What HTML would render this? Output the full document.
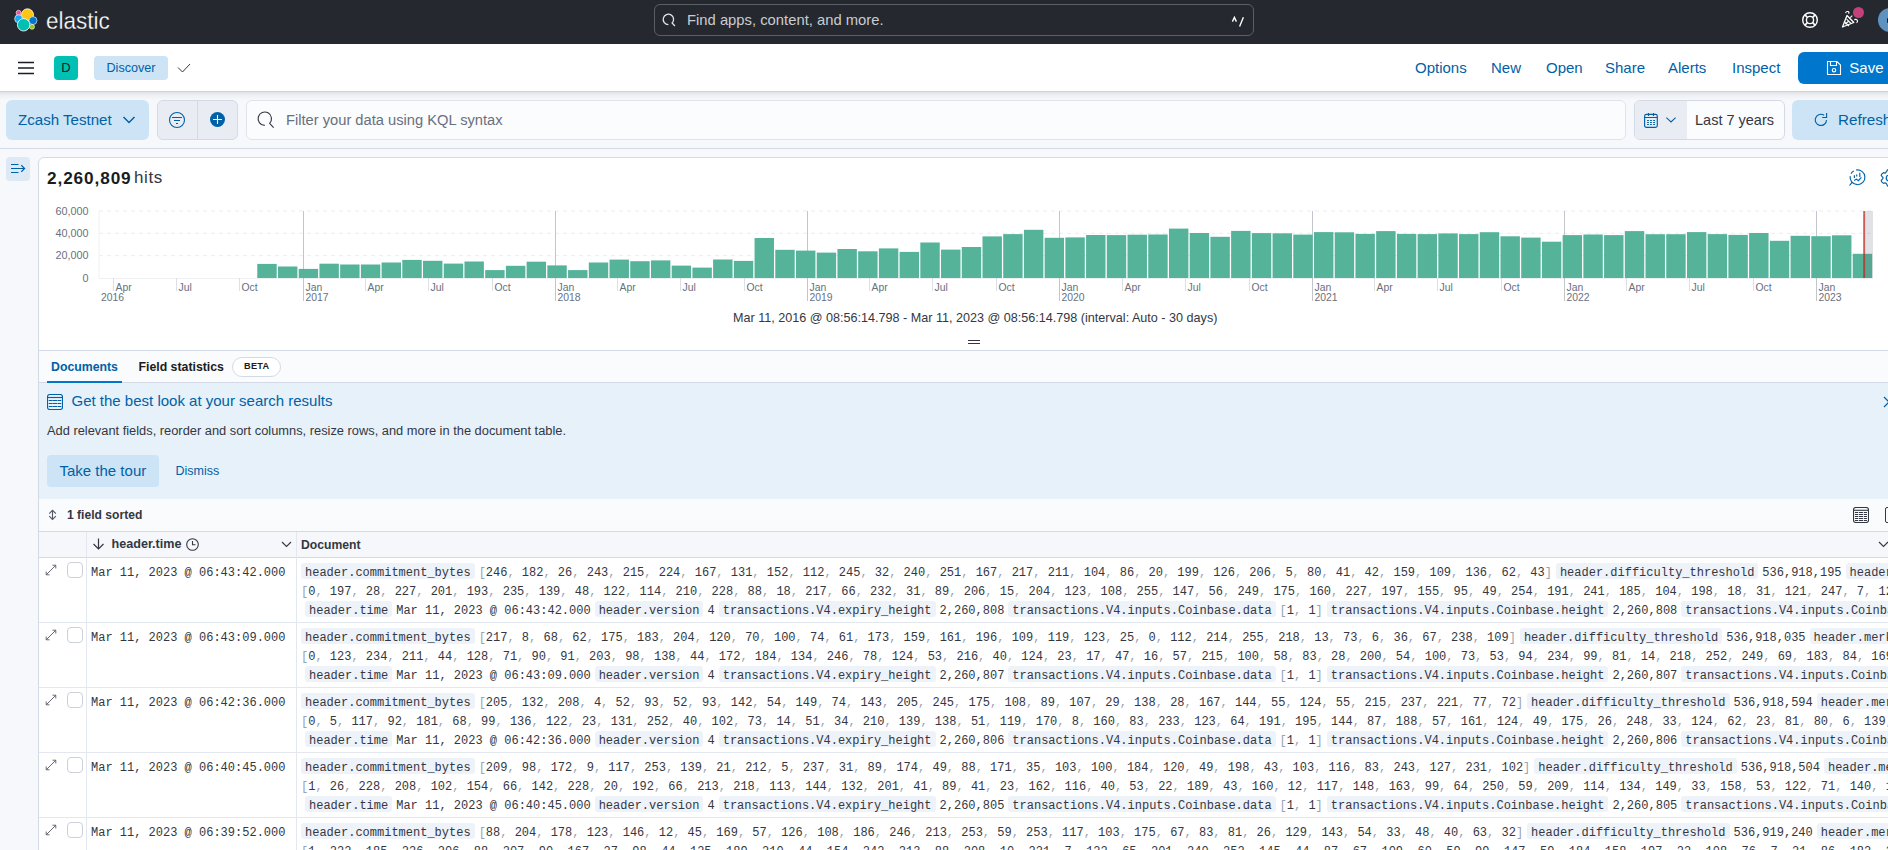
<!DOCTYPE html>
<html><head><meta charset="utf-8">
<style>
*{box-sizing:border-box;margin:0;padding:0}
html,body{width:1888px;height:850px;overflow:hidden;background:#f7f8fc;font-family:"Liberation Sans",sans-serif;color:#343741}
.abs{position:absolute}
svg{display:block}
/* header */
#hdr{position:absolute;left:0;top:0;width:1888px;height:44px;background:#25282f}
#appbar{position:absolute;left:0;top:44px;width:1888px;height:48px;background:#fff;border-bottom:1px solid #cdd3dd}
#shadow{position:absolute;left:0;top:92px;width:1888px;height:8px;background:linear-gradient(rgba(0,0,0,0.09),rgba(0,0,0,0.035) 40%,rgba(0,0,0,0))}
#qbar{position:absolute;left:0;top:92px;width:1888px;height:57px;background:#f7f8fc;border-bottom:1px solid #d3dae6}
.link{position:absolute;top:58px;font-size:15px;line-height:20px;color:#0061a6;white-space:nowrap}
.lbl{white-space:nowrap;position:absolute}
</style></head><body>

<!-- ============ HEADER ============ -->
<div id="hdr">
  <svg class="abs" style="left:13px;top:7px" width="26" height="26" viewBox="0 0 26 26">
    <circle cx="14.5" cy="7.8" r="6" fill="#fec514" stroke="#fff" stroke-width="0.8"/>
    <circle cx="5.6" cy="5.8" r="2.5" fill="#f04e98" stroke="#fff" stroke-width="0.6"/>
    <circle cx="5.6" cy="11.8" r="4" fill="#1ba9f5" stroke="#fff" stroke-width="0.6"/>
    <circle cx="20" cy="13.6" r="4" fill="#0077cc" stroke="#fff" stroke-width="0.6"/>
    <circle cx="19" cy="19.8" r="2.5" fill="#93c90e" stroke="#fff" stroke-width="0.6"/>
    <circle cx="10.6" cy="17.8" r="6.2" fill="#00bfb3" stroke="#fff" stroke-width="0.8"/>
  </svg>
  <div class="lbl" style="left:46px;top:8px;font-size:24.6px;line-height:26px;color:#fff;-webkit-text-stroke:0.3px #25282f;transform:scaleX(0.915);transform-origin:0 0">elastic</div>

  <div class="abs" style="left:654px;top:4px;width:600px;height:32px;border:1px solid #5a5f67;border-radius:6px"></div>
  <svg class="abs" style="left:660px;top:12px" width="16" height="16" viewBox="0 0 16 16"><path d="M8.4 12.6A5.2 5.2 0 1 1 12.14 11.01L14.9 14" fill="none" stroke="#dfe5ef" stroke-width="1.3"/></svg>
  <div class="lbl" style="left:687px;top:10px;font-size:14.8px;line-height:20px;color:#c9ccd2">Find apps, content, and more.</div>
  <svg class="abs" style="left:1230px;top:15px" width="16" height="14" viewBox="0 0 16 14"><path d="M2.4 6.6L4.4 2.4L6.4 6.6M9.6 11.6L13.4 2.2" fill="none" stroke="#fff" stroke-width="1.35"/></svg>

  <!-- help -->
  <svg class="abs" style="left:1801px;top:11px" width="18" height="18" viewBox="0 0 18 18"><circle cx="9" cy="9" r="7.3" fill="none" stroke="#fff" stroke-width="1.4"/><circle cx="9" cy="9" r="3.6" fill="none" stroke="#fff" stroke-width="1.4"/><path d="M3.9 3.9L6.4 6.4M14.1 3.9L11.6 6.4M3.9 14.1L6.4 11.6M14.1 14.1L11.6 11.6" stroke="#fff" stroke-width="1.6"/></svg>
  <!-- announce -->
  <svg class="abs" style="left:1840px;top:8px" width="22" height="22" viewBox="0 0 22 22"><path d="M2.5 19L7 7.5L13.8 14.5Z" fill="none" stroke="#fff" stroke-width="1.3" stroke-linejoin="round"/><path d="M5.2 16.2L8.2 13.5M6.6 11.2L11 15.5M4 13.5L9 18" fill="none" stroke="#fff" stroke-width="1.1"/><path d="M5.6 5.2q0.6-2.3 2.6-1.6q1.2 0.6 0.4 2.2M14.3 11.6q2.6-0.8 3.2 1.1q0.4 1.4-1 2M10.2 9.6L12.3 7.6" fill="none" stroke="#fff" stroke-width="1.1"/></svg>
  <div class="abs" style="left:1852.5px;top:6.5px;width:11px;height:11px;border-radius:50%;background:#c4407c"></div>
  <div class="abs" style="left:1878px;top:8px;width:24px;height:24px;border-radius:50%;background:#6092c0"></div>
  <div class="abs" style="left:1887px;top:18px;width:3px;height:5px;border-radius:1px;background:#1a1c21"></div>
</div>

<!-- ============ APP BAR ============ -->
<div id="appbar"></div>
<svg class="abs" style="left:18px;top:61px" width="16" height="14" viewBox="0 0 16 14"><path d="M0 1.5H16M0 7H16M0 12.5H16" stroke="#1a1c21" stroke-width="1.5"/></svg>
<div class="abs" style="left:54px;top:56px;width:24px;height:24px;border-radius:4px;background:#00bfb3;color:#1a1c21;font-size:13px;line-height:24px;text-align:center">D</div>
<div class="abs" style="left:94px;top:56px;width:74px;height:24px;border-radius:4px;background:#cce4f5;color:#0061a6;font-size:12.6px;line-height:24px;text-align:center">Discover</div>
<svg class="abs" style="left:177px;top:63px" width="14" height="10" viewBox="0 0 14 10"><path d="M1 4.5L5.5 9L13 1" fill="none" stroke="#343741" stroke-width="1"/></svg>

<div class="link" style="left:1415px">Options</div>
<div class="link" style="left:1491px">New</div>
<div class="link" style="left:1546px">Open</div>
<div class="link" style="left:1605px">Share</div>
<div class="link" style="left:1668px">Alerts</div>
<div class="link" style="left:1732px">Inspect</div>
<div class="abs" style="left:1798px;top:52px;width:120px;height:32px;border-radius:6px;background:#0077cc"></div>
<svg class="abs" style="left:1826px;top:60px" width="16" height="16" viewBox="0 0 16 16"><path d="M1.5 1.5H11L14.5 5V14.5H1.5Z" fill="none" stroke="#fff" stroke-width="1.1"/><path d="M4.5 1.5V5.5H10.5V1.5" fill="none" stroke="#fff" stroke-width="1.1"/><circle cx="8" cy="10.2" r="1.7" fill="none" stroke="#fff" stroke-width="1.1"/></svg>
<div class="link" style="left:1849.3px;color:#fff">Save</div>

<!-- ============ QUERY BAR ============ -->
<div id="qbar"></div>
<div id="shadow"></div>
<div class="abs" style="left:6px;top:100px;width:143px;height:40px;border-radius:6px;background:#cce4f5"></div>
<div class="lbl" style="left:18px;top:110px;font-size:15.1px;line-height:20px;color:#0061a6">Zcash Testnet</div>
<svg class="abs" style="left:122px;top:115px" width="14" height="10" viewBox="0 0 14 10"><path d="M1.5 2L7 7.5L12.5 2" fill="none" stroke="#0061a6" stroke-width="1.5"/></svg>

<div class="abs" style="left:157px;top:100px;width:81px;height:40px;border-radius:6px;background:#e9edf3;border:1px solid #d3dae6"></div>
<div class="abs" style="left:197px;top:101px;width:1px;height:38px;background:#d3dae6"></div>
<svg class="abs" style="left:168px;top:111px" width="18" height="18" viewBox="0 0 18 18"><circle cx="9" cy="9" r="7.5" fill="none" stroke="#0061a6" stroke-width="1.1"/><path d="M4 6.5H14M6 9.5H12M8 12.5H10" stroke="#0061a6" stroke-width="1.1"/></svg>
<svg class="abs" style="left:209px;top:112px" width="17" height="16" viewBox="0 0 17 16"><circle cx="8.5" cy="7.5" r="7.5" fill="#0061a6"/><path d="M8.5 3V12M4 7.5H13" stroke="#fff" stroke-width="1.1"/></svg>

<div class="abs" style="left:246px;top:100px;width:1380px;height:40px;border-radius:6px;background:#fbfcfd;border:1px solid #dfe4ec"></div>
<svg class="abs" style="left:255px;top:109px" width="20" height="20" viewBox="0 0 20 20"><path d="M9.8 16.4A6.7 6.7 0 1 1 14.62 14.35L18.6 18.6" fill="none" stroke="#343741" stroke-width="1.15"/></svg>
<div class="lbl" style="left:286px;top:110px;font-size:14.7px;line-height:20px;color:#69707d">Filter your data using KQL syntax</div>

<div class="abs" style="left:1634px;top:100px;width:151px;height:40px;border-radius:6px;background:#fbfcfd;border:1px solid #d3dae6;overflow:hidden"><div style="position:absolute;left:0;top:0;width:52px;height:38px;background:#e9edf3"></div></div>
<svg class="abs" style="left:1644px;top:113px" width="15" height="16" viewBox="0 0 15 16"><rect x="0.6" y="1.4" width="12.7" height="12.9" rx="1.8" fill="none" stroke="#0061a6" stroke-width="1.15"/><path d="M0.6 4.5H13.3M4.5 -0.2V3M9.5 -0.2V3" stroke="#0061a6" stroke-width="1.15"/><path d="M3.1 7.5h1.8M6.1 7.5h1.8M9.2 7.5h1.8M3.1 9.5h1.8M6.1 9.5h1.8M9.2 9.5h1.8M3.1 11.5h1.8M6.1 11.5h1.8M9.2 11.5h1.8" stroke="#0061a6" stroke-width="1"/></svg>
<svg class="abs" style="left:1666px;top:117px" width="10" height="6" viewBox="0 0 10 6"><path d="M0.3 0.6L5 5L9.7 0.6" fill="none" stroke="#0061a6" stroke-width="1.15"/></svg>
<div class="lbl" style="left:1695px;top:110px;font-size:14.5px;line-height:20px;color:#343741">Last 7 years</div>

<div class="abs" style="left:1792px;top:100px;width:120px;height:40px;border-radius:6px;background:#cce4f5"></div>
<svg class="abs" style="left:1814px;top:112px" width="14" height="14" viewBox="0 0 14 14"><path d="M10.1 3.3A5.6 5.6 0 1 0 12.5 7.9" fill="none" stroke="#0061a6" stroke-width="1.1"/><path d="M12.6 1.1V5.5H8.2" fill="none" stroke="#0061a6" stroke-width="1.1"/></svg>
<div class="lbl" style="left:1838px;top:110px;font-size:15.2px;line-height:20px;color:#0061a6">Refresh</div>

<!-- ============ MAIN ============ -->
<div class="abs" style="left:6px;top:157px;width:24px;height:24px;border-radius:4px;background:#dde9f5"></div>
<svg class="abs" style="left:10px;top:163px" width="16" height="12" viewBox="0 0 16 12"><path d="M1 1.5H8.5M1 5.5H14.5M1 9.5H8.5M11.3 2.3L14.6 5.5L11.3 8.7" fill="none" stroke="#0061a6" stroke-width="1.2"/></svg>

<div id="panel" class="abs" style="left:38px;top:157px;width:1900px;height:800px;background:#fff;border:1px solid #d3dae6;border-radius:6px 0 0 0;overflow:hidden">
</div>
<style>
.mono{position:absolute;font-family:"Liberation Mono",monospace;font-size:12px;line-height:19px;color:#343741;white-space:nowrap}
.doc b{font-weight:normal;background:#eef2f9;border-radius:3px;padding:0 4px;margin-right:4px;display:inline-block;height:15.5px;line-height:21px;vertical-align:baseline;overflow:visible}
.doc .v{margin-right:4px}
.doc i{font-style:normal;color:#98a2b3}
</style>
<div class="lbl" style="left:47px;top:167px;line-height:22px;color:#1a1c21"><span style="font-weight:bold;font-size:17.2px;letter-spacing:0.9px">2,260,809</span></div><div class="lbl" style="left:134px;top:167px;line-height:22px;font-size:17px;color:#343741;letter-spacing:0.6px">hits</div>
<svg class="abs" style="left:1848px;top:168px" width="18" height="19" viewBox="0 0 18 19"><path d="M8.01 2.05A7.4 7.4 0 1 1 2.2 8.06M3.01 5.75A7.4 7.4 0 0 1 5.69 2.96M4.1 14.4L1.5 17.5M6.4 7.2V10.1M8.7 6.4V8.4M11.8 4.8V8.9M6.2 12.6L8.5 11.1L10.3 12.6L13.4 9.3" fill="none" stroke="#0061a6" stroke-width="1.15"/></svg>
<svg class="abs" style="left:1880px;top:169px" width="18" height="18" viewBox="0 0 18 18"><path d="M7.5 0.9L6.1 3.2L5.2 4.2L3.5 3.6L1.9 4.9L1.2 6.3L3.2 9L1.2 11.7L1.9 13.1L3.5 14.4L5.2 13.8L6.5 14.8L7.5 17.1L10.5 17.1L11.5 14.8L12.8 13.8L14.5 14.4L16.1 13.1L16.8 11.7L14.8 9L16.8 6.3L16.1 4.9L14.5 3.6L12.8 4.2L11.9 3.2L10.5 0.9Z" fill="none" stroke="#0061a6" stroke-width="1.15" stroke-linejoin="round"/><circle cx="9" cy="9" r="2.8" fill="none" stroke="#0061a6" stroke-width="1.15"/></svg>
<svg class="abs" style="left:0;top:195px" width="1888" height="115" viewBox="0 195 1888 115">
<line x1="99" y1="211.0" x2="1873" y2="211.0" stroke="#eaedf1" stroke-width="1" stroke-dasharray="4 4"/>
<line x1="99" y1="233.33" x2="1873" y2="233.33" stroke="#eaedf1" stroke-width="1" stroke-dasharray="4 4"/>
<line x1="99" y1="255.67" x2="1873" y2="255.67" stroke="#eaedf1" stroke-width="1" stroke-dasharray="4 4"/>
<line x1="99" y1="211" x2="99" y2="278.5" stroke="#eef0f3" stroke-width="1"/>
<line x1="99" y1="278.5" x2="1873" y2="278.5" stroke="#eef0f3" stroke-width="1"/>
<line x1="113.5" y1="278" x2="113.5" y2="291" stroke="#dde1e7" stroke-width="1"/>
<text x="115.5" y="290.7" font-size="10.4" fill="#69707d" font-family="Liberation Sans">Apr</text>
<line x1="176.5" y1="278" x2="176.5" y2="291" stroke="#dde1e7" stroke-width="1"/>
<text x="178.5" y="290.7" font-size="10.4" fill="#69707d" font-family="Liberation Sans">Jul</text>
<line x1="239.5" y1="278" x2="239.5" y2="291" stroke="#dde1e7" stroke-width="1"/>
<text x="241.5" y="290.7" font-size="10.4" fill="#69707d" font-family="Liberation Sans">Oct</text>
<line x1="303.5" y1="211" x2="303.5" y2="301" stroke="#c2c6cc" stroke-width="1"/>
<text x="305.5" y="290.7" font-size="10.4" fill="#69707d" font-family="Liberation Sans">Jan</text>
<text x="305.5" y="300.7" font-size="10.4" fill="#69707d" font-family="Liberation Sans">2017</text>
<line x1="365.5" y1="278" x2="365.5" y2="291" stroke="#dde1e7" stroke-width="1"/>
<text x="367.5" y="290.7" font-size="10.4" fill="#69707d" font-family="Liberation Sans">Apr</text>
<line x1="428.5" y1="278" x2="428.5" y2="291" stroke="#dde1e7" stroke-width="1"/>
<text x="430.5" y="290.7" font-size="10.4" fill="#69707d" font-family="Liberation Sans">Jul</text>
<line x1="492.5" y1="278" x2="492.5" y2="291" stroke="#dde1e7" stroke-width="1"/>
<text x="494.5" y="290.7" font-size="10.4" fill="#69707d" font-family="Liberation Sans">Oct</text>
<line x1="555.5" y1="211" x2="555.5" y2="301" stroke="#c2c6cc" stroke-width="1"/>
<text x="557.5" y="290.7" font-size="10.4" fill="#69707d" font-family="Liberation Sans">Jan</text>
<text x="557.5" y="300.7" font-size="10.4" fill="#69707d" font-family="Liberation Sans">2018</text>
<line x1="617.5" y1="278" x2="617.5" y2="291" stroke="#dde1e7" stroke-width="1"/>
<text x="619.5" y="290.7" font-size="10.4" fill="#69707d" font-family="Liberation Sans">Apr</text>
<line x1="680.5" y1="278" x2="680.5" y2="291" stroke="#dde1e7" stroke-width="1"/>
<text x="682.5" y="290.7" font-size="10.4" fill="#69707d" font-family="Liberation Sans">Jul</text>
<line x1="744.5" y1="278" x2="744.5" y2="291" stroke="#dde1e7" stroke-width="1"/>
<text x="746.5" y="290.7" font-size="10.4" fill="#69707d" font-family="Liberation Sans">Oct</text>
<line x1="807.5" y1="211" x2="807.5" y2="301" stroke="#c2c6cc" stroke-width="1"/>
<text x="809.5" y="290.7" font-size="10.4" fill="#69707d" font-family="Liberation Sans">Jan</text>
<text x="809.5" y="300.7" font-size="10.4" fill="#69707d" font-family="Liberation Sans">2019</text>
<line x1="869.5" y1="278" x2="869.5" y2="291" stroke="#dde1e7" stroke-width="1"/>
<text x="871.5" y="290.7" font-size="10.4" fill="#69707d" font-family="Liberation Sans">Apr</text>
<line x1="932.5" y1="278" x2="932.5" y2="291" stroke="#dde1e7" stroke-width="1"/>
<text x="934.5" y="290.7" font-size="10.4" fill="#69707d" font-family="Liberation Sans">Jul</text>
<line x1="996.5" y1="278" x2="996.5" y2="291" stroke="#dde1e7" stroke-width="1"/>
<text x="998.5" y="290.7" font-size="10.4" fill="#69707d" font-family="Liberation Sans">Oct</text>
<line x1="1059.5" y1="211" x2="1059.5" y2="301" stroke="#c2c6cc" stroke-width="1"/>
<text x="1061.5" y="290.7" font-size="10.4" fill="#69707d" font-family="Liberation Sans">Jan</text>
<text x="1061.5" y="300.7" font-size="10.4" fill="#69707d" font-family="Liberation Sans">2020</text>
<line x1="1122.5" y1="278" x2="1122.5" y2="291" stroke="#dde1e7" stroke-width="1"/>
<text x="1124.5" y="290.7" font-size="10.4" fill="#69707d" font-family="Liberation Sans">Apr</text>
<line x1="1185.5" y1="278" x2="1185.5" y2="291" stroke="#dde1e7" stroke-width="1"/>
<text x="1187.5" y="290.7" font-size="10.4" fill="#69707d" font-family="Liberation Sans">Jul</text>
<line x1="1249.5" y1="278" x2="1249.5" y2="291" stroke="#dde1e7" stroke-width="1"/>
<text x="1251.5" y="290.7" font-size="10.4" fill="#69707d" font-family="Liberation Sans">Oct</text>
<line x1="1312.5" y1="211" x2="1312.5" y2="301" stroke="#c2c6cc" stroke-width="1"/>
<text x="1314.5" y="290.7" font-size="10.4" fill="#69707d" font-family="Liberation Sans">Jan</text>
<text x="1314.5" y="300.7" font-size="10.4" fill="#69707d" font-family="Liberation Sans">2021</text>
<line x1="1374.5" y1="278" x2="1374.5" y2="291" stroke="#dde1e7" stroke-width="1"/>
<text x="1376.5" y="290.7" font-size="10.4" fill="#69707d" font-family="Liberation Sans">Apr</text>
<line x1="1437.5" y1="278" x2="1437.5" y2="291" stroke="#dde1e7" stroke-width="1"/>
<text x="1439.5" y="290.7" font-size="10.4" fill="#69707d" font-family="Liberation Sans">Jul</text>
<line x1="1501.5" y1="278" x2="1501.5" y2="291" stroke="#dde1e7" stroke-width="1"/>
<text x="1503.5" y="290.7" font-size="10.4" fill="#69707d" font-family="Liberation Sans">Oct</text>
<line x1="1564.5" y1="211" x2="1564.5" y2="301" stroke="#c2c6cc" stroke-width="1"/>
<text x="1566.5" y="290.7" font-size="10.4" fill="#69707d" font-family="Liberation Sans">Jan</text>
<text x="1566.5" y="300.7" font-size="10.4" fill="#69707d" font-family="Liberation Sans">2022</text>
<line x1="1626.5" y1="278" x2="1626.5" y2="291" stroke="#dde1e7" stroke-width="1"/>
<text x="1628.5" y="290.7" font-size="10.4" fill="#69707d" font-family="Liberation Sans">Apr</text>
<line x1="1689.5" y1="278" x2="1689.5" y2="291" stroke="#dde1e7" stroke-width="1"/>
<text x="1691.5" y="290.7" font-size="10.4" fill="#69707d" font-family="Liberation Sans">Jul</text>
<line x1="1753.5" y1="278" x2="1753.5" y2="291" stroke="#dde1e7" stroke-width="1"/>
<text x="1755.5" y="290.7" font-size="10.4" fill="#69707d" font-family="Liberation Sans">Oct</text>
<line x1="1816.5" y1="211" x2="1816.5" y2="301" stroke="#c2c6cc" stroke-width="1"/>
<text x="1818.5" y="290.7" font-size="10.4" fill="#69707d" font-family="Liberation Sans">Jan</text>
<text x="1818.5" y="300.7" font-size="10.4" fill="#69707d" font-family="Liberation Sans">2023</text>
<rect x="257.27" y="263.90" width="19.42" height="14.10" fill="#54b399"/>
<rect x="277.99" y="266.50" width="19.42" height="11.50" fill="#54b399"/>
<rect x="298.71" y="268.90" width="19.42" height="9.10" fill="#54b399"/>
<rect x="319.43" y="263.70" width="19.42" height="14.30" fill="#54b399"/>
<rect x="340.15" y="264.50" width="19.42" height="13.50" fill="#54b399"/>
<rect x="360.87" y="264.50" width="19.42" height="13.50" fill="#54b399"/>
<rect x="381.59" y="262.50" width="19.42" height="15.50" fill="#54b399"/>
<rect x="402.31" y="259.90" width="19.42" height="18.10" fill="#54b399"/>
<rect x="423.03" y="260.80" width="19.42" height="17.20" fill="#54b399"/>
<rect x="443.75" y="263.60" width="19.42" height="14.40" fill="#54b399"/>
<rect x="464.47" y="261.50" width="19.42" height="16.50" fill="#54b399"/>
<rect x="485.19" y="270.10" width="19.42" height="7.90" fill="#54b399"/>
<rect x="505.91" y="265.80" width="19.42" height="12.20" fill="#54b399"/>
<rect x="526.63" y="261.70" width="19.42" height="16.30" fill="#54b399"/>
<rect x="547.35" y="265.40" width="19.42" height="12.60" fill="#54b399"/>
<rect x="568.07" y="270.10" width="19.42" height="7.90" fill="#54b399"/>
<rect x="588.80" y="262.50" width="19.42" height="15.50" fill="#54b399"/>
<rect x="609.52" y="259.60" width="19.42" height="18.40" fill="#54b399"/>
<rect x="630.24" y="261.20" width="19.42" height="16.80" fill="#54b399"/>
<rect x="650.96" y="260.40" width="19.42" height="17.60" fill="#54b399"/>
<rect x="671.68" y="265.60" width="19.42" height="12.40" fill="#54b399"/>
<rect x="692.40" y="267.60" width="19.42" height="10.40" fill="#54b399"/>
<rect x="713.12" y="259.50" width="19.42" height="18.50" fill="#54b399"/>
<rect x="733.84" y="260.90" width="19.42" height="17.10" fill="#54b399"/>
<rect x="754.56" y="238.00" width="19.42" height="40.00" fill="#54b399"/>
<rect x="775.28" y="249.80" width="19.42" height="28.20" fill="#54b399"/>
<rect x="796.00" y="250.60" width="19.42" height="27.40" fill="#54b399"/>
<rect x="816.72" y="252.60" width="19.42" height="25.40" fill="#54b399"/>
<rect x="837.44" y="249.00" width="19.42" height="29.00" fill="#54b399"/>
<rect x="858.16" y="251.30" width="19.42" height="26.70" fill="#54b399"/>
<rect x="878.88" y="248.40" width="19.42" height="29.60" fill="#54b399"/>
<rect x="899.60" y="251.90" width="19.42" height="26.10" fill="#54b399"/>
<rect x="920.32" y="242.50" width="19.42" height="35.50" fill="#54b399"/>
<rect x="941.04" y="249.60" width="19.42" height="28.40" fill="#54b399"/>
<rect x="961.76" y="247.00" width="19.42" height="31.00" fill="#54b399"/>
<rect x="982.48" y="236.40" width="19.42" height="41.60" fill="#54b399"/>
<rect x="1003.20" y="234.10" width="19.42" height="43.90" fill="#54b399"/>
<rect x="1023.92" y="229.80" width="19.42" height="48.20" fill="#54b399"/>
<rect x="1044.64" y="237.80" width="19.42" height="40.20" fill="#54b399"/>
<rect x="1065.36" y="237.40" width="19.42" height="40.60" fill="#54b399"/>
<rect x="1086.08" y="235.00" width="19.42" height="43.00" fill="#54b399"/>
<rect x="1106.80" y="235.10" width="19.42" height="42.90" fill="#54b399"/>
<rect x="1127.52" y="234.70" width="19.42" height="43.30" fill="#54b399"/>
<rect x="1148.24" y="234.50" width="19.42" height="43.50" fill="#54b399"/>
<rect x="1168.96" y="228.60" width="19.42" height="49.40" fill="#54b399"/>
<rect x="1189.68" y="233.00" width="19.42" height="45.00" fill="#54b399"/>
<rect x="1210.40" y="236.80" width="19.42" height="41.20" fill="#54b399"/>
<rect x="1231.12" y="230.90" width="19.42" height="47.10" fill="#54b399"/>
<rect x="1251.84" y="233.10" width="19.42" height="44.90" fill="#54b399"/>
<rect x="1272.56" y="233.30" width="19.42" height="44.70" fill="#54b399"/>
<rect x="1293.28" y="234.60" width="19.42" height="43.40" fill="#54b399"/>
<rect x="1314.00" y="232.10" width="19.42" height="45.90" fill="#54b399"/>
<rect x="1334.72" y="232.30" width="19.42" height="45.70" fill="#54b399"/>
<rect x="1355.44" y="233.90" width="19.42" height="44.10" fill="#54b399"/>
<rect x="1376.16" y="231.10" width="19.42" height="46.90" fill="#54b399"/>
<rect x="1396.88" y="233.90" width="19.42" height="44.10" fill="#54b399"/>
<rect x="1417.60" y="234.10" width="19.42" height="43.90" fill="#54b399"/>
<rect x="1438.32" y="233.40" width="19.42" height="44.60" fill="#54b399"/>
<rect x="1459.04" y="234.10" width="19.42" height="43.90" fill="#54b399"/>
<rect x="1479.76" y="232.20" width="19.42" height="45.80" fill="#54b399"/>
<rect x="1500.48" y="236.30" width="19.42" height="41.70" fill="#54b399"/>
<rect x="1521.20" y="237.60" width="19.42" height="40.40" fill="#54b399"/>
<rect x="1541.92" y="241.70" width="19.42" height="36.30" fill="#54b399"/>
<rect x="1562.64" y="235.10" width="19.42" height="42.90" fill="#54b399"/>
<rect x="1583.36" y="234.50" width="19.42" height="43.50" fill="#54b399"/>
<rect x="1604.08" y="235.10" width="19.42" height="42.90" fill="#54b399"/>
<rect x="1624.80" y="231.10" width="19.42" height="46.90" fill="#54b399"/>
<rect x="1645.52" y="234.20" width="19.42" height="43.80" fill="#54b399"/>
<rect x="1666.24" y="234.20" width="19.42" height="43.80" fill="#54b399"/>
<rect x="1686.96" y="232.10" width="19.42" height="45.90" fill="#54b399"/>
<rect x="1707.68" y="234.10" width="19.42" height="43.90" fill="#54b399"/>
<rect x="1728.40" y="234.90" width="19.42" height="43.10" fill="#54b399"/>
<rect x="1749.12" y="233.00" width="19.42" height="45.00" fill="#54b399"/>
<rect x="1769.84" y="240.80" width="19.42" height="37.20" fill="#54b399"/>
<rect x="1790.56" y="235.80" width="19.42" height="42.20" fill="#54b399"/>
<rect x="1811.28" y="236.20" width="19.42" height="41.80" fill="#54b399"/>
<rect x="1832.00" y="235.30" width="19.42" height="42.70" fill="#54b399"/>
<rect x="1852.72" y="253.80" width="19.42" height="24.20" fill="#54b399"/>
<text x="101" y="300.7" font-size="10.4" fill="#69707d" font-family="Liberation Sans">2016</text>
<text x="88.5" y="214.70" font-size="10.8" fill="#69707d" text-anchor="end" font-family="Liberation Sans">60,000</text>
<text x="88.5" y="237.03" font-size="10.8" fill="#69707d" text-anchor="end" font-family="Liberation Sans">40,000</text>
<text x="88.5" y="259.37" font-size="10.8" fill="#69707d" text-anchor="end" font-family="Liberation Sans">20,000</text>
<text x="88.5" y="281.70" font-size="10.8" fill="#69707d" text-anchor="end" font-family="Liberation Sans">0</text>
<rect x="1865" y="211" width="8" height="67" fill="rgba(105,112,125,0.2)"/>
<rect x="1863.2" y="211" width="1.9" height="67" fill="#bd271e" opacity="0.75"/>
</svg>
<div class="lbl" style="left:733px;top:310px;font-size:12.6px;line-height:16px;color:#343741">Mar 11, 2016 @ 08:56:14.798 - Mar 11, 2023 @ 08:56:14.798 (interval: Auto - 30 days)</div>
<div class="abs" style="left:968px;top:340px;width:12px;height:1px;background:#343741"></div><div class="abs" style="left:968px;top:343px;width:12px;height:1px;background:#343741"></div>
<div class="abs" style="left:39px;top:350px;width:1849px;height:1px;background:#d3dae6"></div>
<div class="abs" style="left:39px;top:351px;width:1849px;height:31px;background:#fafbfd"></div>
<div class="abs" style="left:39px;top:382px;width:1849px;height:1px;background:#d3dae6"></div>
<div class="lbl" style="left:51px;top:359px;font-size:12.3px;line-height:16px;font-weight:bold;color:#0061a6">Documents</div>
<div class="abs" style="left:47px;top:381px;width:75px;height:2px;background:#0077cc"></div>
<div class="lbl" style="left:138.5px;top:359px;font-size:12.3px;line-height:16px;font-weight:bold;color:#1a1c21">Field statistics</div>
<div class="abs" style="left:232px;top:357px;width:49px;height:20px;border:1px solid #d3dae6;border-radius:10px;background:#fff"></div>
<div class="lbl" style="left:244px;top:359.2px;font-size:9.2px;line-height:14px;font-weight:bold;color:#1a1c21;letter-spacing:0.3px">BETA</div>
<div class="abs" style="left:39px;top:383px;width:1849px;height:116px;background:#e6f1fa"></div>
<svg class="abs" style="left:47px;top:394px" width="16" height="16" viewBox="0 0 16 16"><rect x="0.5" y="0.5" width="15" height="15" rx="2.2" fill="none" stroke="#0061a6" stroke-width="1.1"/><path d="M0.5 3.5H15.5" stroke="#0061a6" stroke-width="1.1"/><path d="M2.1 6.5h2.8M6 6.5h3.8M11.1 6.5h2.8M2.1 9.5h2.8M6 9.5h3.8M11.1 9.5h2.8M2.1 12.5h2.8M6 12.5h3.8M11.1 12.5h2.8" stroke="#0061a6" stroke-width="1.1" stroke-linecap="round"/></svg>
<div class="lbl" style="left:71.5px;top:392px;font-size:15px;line-height:18px;color:#0061a6">Get the best look at your search results</div>
<svg class="abs" style="left:1883px;top:396px" width="12" height="12" viewBox="0 0 12 12"><path d="M1 1L11 11M11 1L1 11" stroke="#0061a6" stroke-width="1.2"/></svg>
<div class="lbl" style="left:47px;top:423px;font-size:12.85px;line-height:16px;color:#343741">Add relevant fields, reorder and sort columns, resize rows, and more in the document table.</div>
<div class="abs" style="left:47px;top:455px;width:112px;height:32px;border-radius:4px;background:#cce4f5"></div>
<div class="lbl" style="left:59.5px;top:462px;font-size:15px;line-height:18px;color:#0061a6">Take the tour</div>
<div class="lbl" style="left:175.5px;top:463px;font-size:12.5px;line-height:16px;color:#0061a6">Dismiss</div>
<div class="abs" style="left:39px;top:499px;width:1849px;height:32px;background:#fafbfd"></div>
<svg class="abs" style="left:48px;top:509px" width="9" height="12" viewBox="0 0 9 12"><path d="M4.5 1.2V10.6M1.2 4.6L4.5 1.3L7.9 4.6M1.2 7.2L4.5 10.5L7.9 7.2" fill="none" stroke="#535966" stroke-width="1.1"/></svg>
<div class="lbl" style="left:67px;top:507px;font-size:12.1px;line-height:16px;font-weight:bold;color:#343741">1 field sorted</div>
<svg class="abs" style="left:1853px;top:507px" width="16" height="16" viewBox="0 0 16 16"><rect x="0.5" y="0.5" width="15" height="15" rx="2.2" fill="none" stroke="#343741" stroke-width="1.1"/><path d="M0.5 3.3H15.5" stroke="#343741" stroke-width="1.1"/><path d="M2.3 5.5h2.4M6.2 5.5h3.4M11.2 5.5h2.4M2.3 7.5h2.4M6.2 7.5h3.4M11.2 7.5h2.4M2.3 9.5h2.4M6.2 9.5h3.4M11.2 9.5h2.4M2.3 11.5h2.4M6.2 11.5h3.4M11.2 11.5h2.4M2.3 13.5h2.4M6.2 13.5h3.4M11.2 13.5h2.4" stroke="#343741" stroke-width="1" stroke-linecap="round"/></svg>
<div class="abs" style="left:1885px;top:507px;width:10px;height:16px;border:1.2px solid #343741;border-radius:2px"></div>
<div class="abs" style="left:39px;top:531px;width:1849px;height:1px;background:#d3dae6"></div>
<div class="abs" style="left:39px;top:532px;width:1849px;height:25px;background:#f5f7fa"></div>
<div class="abs" style="left:39px;top:557px;width:1849px;height:1px;background:#d3dae6"></div>
<div class="abs" style="left:39px;top:558px;width:1849px;height:300px;background:#fff"></div>
<div class="abs" style="left:86px;top:532px;width:1px;height:320px;background:#e3e8f0"></div>
<div class="abs" style="left:296px;top:532px;width:1px;height:320px;background:#e3e8f0"></div>
<svg class="abs" style="left:92px;top:538px" width="13" height="12" viewBox="0 0 13 12"><path d="M6.5 0.5V11M1.5 6L6.5 11L11.5 6" fill="none" stroke="#343741" stroke-width="1.2"/></svg>
<div class="lbl" style="left:111.5px;top:536px;font-size:12.6px;line-height:16px;font-weight:bold;color:#343741">header.time</div>
<svg class="abs" style="left:186px;top:538px" width="13" height="13" viewBox="0 0 13 13"><circle cx="6.5" cy="6.5" r="5.8" fill="none" stroke="#343741" stroke-width="1.1"/><path d="M6.5 3V6.8H9.5" fill="none" stroke="#343741" stroke-width="1.1"/></svg>
<svg class="abs" style="left:281px;top:541px" width="11" height="7" viewBox="0 0 11 7"><path d="M1 1L5.5 5.5L10 1" fill="none" stroke="#343741" stroke-width="1.1"/></svg>
<div class="lbl" style="left:301px;top:537px;font-size:12.2px;line-height:16px;font-weight:bold;color:#343741">Document</div>
<svg class="abs" style="left:1878px;top:541px" width="11" height="7" viewBox="0 0 11 7"><path d="M1 1L5.5 5.5L10 1" fill="none" stroke="#343741" stroke-width="1.1"/></svg>
<div class="abs" style="left:39px;top:622px;width:1849px;height:1px;background:#e3e8f0"></div>
<svg class="abs" style="left:45px;top:564px" width="12" height="12" viewBox="0 0 12 12"><path d="M1.3 10.7L10.7 1.3M7.5 1.2H10.8V4.5M1.2 7.5V10.8H4.5" fill="none" stroke="#535966" stroke-width="0.9"/></svg>
<div class="abs" style="left:67px;top:562px;width:16px;height:16px;border:1px solid #ccd1d9;border-radius:4px;background:#fff"></div>
<div class="mono" style="left:91px;top:563.5px">Mar 11, 2023 @ 06:43:42.000</div>
<div class="mono doc" style="left:301px;top:563.0px"><b>header.commitment_bytes</b><span class="v"><i>[</i>246<i>,</i> 182<i>,</i> 26<i>,</i> 243<i>,</i> 215<i>,</i> 224<i>,</i> 167<i>,</i> 131<i>,</i> 152<i>,</i> 112<i>,</i> 245<i>,</i> 32<i>,</i> 240<i>,</i> 251<i>,</i> 167<i>,</i> 217<i>,</i> 211<i>,</i> 104<i>,</i> 86<i>,</i> 20<i>,</i> 199<i>,</i> 126<i>,</i> 206<i>,</i> 5<i>,</i> 80<i>,</i> 41<i>,</i> 42<i>,</i> 159<i>,</i> 109<i>,</i> 136<i>,</i> 62<i>,</i> 43<i>]</i></span><b>header.difficulty_threshold</b><span class="v">536,918,195</span><b>header.merkle_root</b></div>
<div class="mono doc" style="left:301px;top:583.0px"><span class="v"><i>[</i>0<i>,</i> 197<i>,</i> 28<i>,</i> 227<i>,</i> 201<i>,</i> 193<i>,</i> 235<i>,</i> 139<i>,</i> 48<i>,</i> 122<i>,</i> 114<i>,</i> 210<i>,</i> 228<i>,</i> 88<i>,</i> 18<i>,</i> 217<i>,</i> 66<i>,</i> 232<i>,</i> 31<i>,</i> 89<i>,</i> 206<i>,</i> 15<i>,</i> 204<i>,</i> 123<i>,</i> 108<i>,</i> 255<i>,</i> 147<i>,</i> 56<i>,</i> 249<i>,</i> 175<i>,</i> 160<i>,</i> 227<i>,</i> 197<i>,</i> 155<i>,</i> 95<i>,</i> 49<i>,</i> 254<i>,</i> 191<i>,</i> 241<i>,</i> 185<i>,</i> 104<i>,</i> 198<i>,</i> 18<i>,</i> 31<i>,</i> 121<i>,</i> 247<i>,</i> 7<i>,</i> 12<i>,</i> 44</span></div>
<div class="mono doc" style="left:305px;top:601.0px"><b>header.time</b><span class="v">Mar 11, 2023 @ 06:43:42.000</span><b>header.version</b><span class="v">4</span><b>transactions.V4.expiry_height</b><span class="v">2,260,808</span><b>transactions.V4.inputs.Coinbase.data</b><span class="v"><i>[</i>1<i>,</i> 1<i>]</i></span><b>transactions.V4.inputs.Coinbase.height</b><span class="v">2,260,808</span><b>transactions.V4.inputs.Coinbase.script</b></div>
<div class="abs" style="left:39px;top:687px;width:1849px;height:1px;background:#e3e8f0"></div>
<svg class="abs" style="left:45px;top:629px" width="12" height="12" viewBox="0 0 12 12"><path d="M1.3 10.7L10.7 1.3M7.5 1.2H10.8V4.5M1.2 7.5V10.8H4.5" fill="none" stroke="#535966" stroke-width="0.9"/></svg>
<div class="abs" style="left:67px;top:627px;width:16px;height:16px;border:1px solid #ccd1d9;border-radius:4px;background:#fff"></div>
<div class="mono" style="left:91px;top:628.5px">Mar 11, 2023 @ 06:43:09.000</div>
<div class="mono doc" style="left:301px;top:628.0px"><b>header.commitment_bytes</b><span class="v"><i>[</i>217<i>,</i> 8<i>,</i> 68<i>,</i> 62<i>,</i> 175<i>,</i> 183<i>,</i> 204<i>,</i> 120<i>,</i> 70<i>,</i> 100<i>,</i> 74<i>,</i> 61<i>,</i> 173<i>,</i> 159<i>,</i> 161<i>,</i> 196<i>,</i> 109<i>,</i> 119<i>,</i> 123<i>,</i> 25<i>,</i> 0<i>,</i> 112<i>,</i> 214<i>,</i> 255<i>,</i> 218<i>,</i> 13<i>,</i> 73<i>,</i> 6<i>,</i> 36<i>,</i> 67<i>,</i> 238<i>,</i> 109<i>]</i></span><b>header.difficulty_threshold</b><span class="v">536,918,035</span><b>header.merkle_root</b></div>
<div class="mono doc" style="left:301px;top:648.0px"><span class="v"><i>[</i>0<i>,</i> 123<i>,</i> 234<i>,</i> 211<i>,</i> 44<i>,</i> 128<i>,</i> 71<i>,</i> 90<i>,</i> 91<i>,</i> 203<i>,</i> 98<i>,</i> 138<i>,</i> 44<i>,</i> 172<i>,</i> 184<i>,</i> 134<i>,</i> 246<i>,</i> 78<i>,</i> 124<i>,</i> 53<i>,</i> 216<i>,</i> 40<i>,</i> 124<i>,</i> 23<i>,</i> 17<i>,</i> 47<i>,</i> 16<i>,</i> 57<i>,</i> 215<i>,</i> 100<i>,</i> 58<i>,</i> 83<i>,</i> 28<i>,</i> 200<i>,</i> 54<i>,</i> 100<i>,</i> 73<i>,</i> 53<i>,</i> 94<i>,</i> 234<i>,</i> 99<i>,</i> 81<i>,</i> 14<i>,</i> 218<i>,</i> 252<i>,</i> 249<i>,</i> 69<i>,</i> 183<i>,</i> 84<i>,</i> 169<i>,</i> 12</span></div>
<div class="mono doc" style="left:305px;top:666.0px"><b>header.time</b><span class="v">Mar 11, 2023 @ 06:43:09.000</span><b>header.version</b><span class="v">4</span><b>transactions.V4.expiry_height</b><span class="v">2,260,807</span><b>transactions.V4.inputs.Coinbase.data</b><span class="v"><i>[</i>1<i>,</i> 1<i>]</i></span><b>transactions.V4.inputs.Coinbase.height</b><span class="v">2,260,807</span><b>transactions.V4.inputs.Coinbase.script</b></div>
<div class="abs" style="left:39px;top:752px;width:1849px;height:1px;background:#e3e8f0"></div>
<svg class="abs" style="left:45px;top:694px" width="12" height="12" viewBox="0 0 12 12"><path d="M1.3 10.7L10.7 1.3M7.5 1.2H10.8V4.5M1.2 7.5V10.8H4.5" fill="none" stroke="#535966" stroke-width="0.9"/></svg>
<div class="abs" style="left:67px;top:692px;width:16px;height:16px;border:1px solid #ccd1d9;border-radius:4px;background:#fff"></div>
<div class="mono" style="left:91px;top:693.5px">Mar 11, 2023 @ 06:42:36.000</div>
<div class="mono doc" style="left:301px;top:693.0px"><b>header.commitment_bytes</b><span class="v"><i>[</i>205<i>,</i> 132<i>,</i> 208<i>,</i> 4<i>,</i> 52<i>,</i> 93<i>,</i> 52<i>,</i> 93<i>,</i> 142<i>,</i> 54<i>,</i> 149<i>,</i> 74<i>,</i> 143<i>,</i> 205<i>,</i> 245<i>,</i> 175<i>,</i> 108<i>,</i> 89<i>,</i> 107<i>,</i> 29<i>,</i> 138<i>,</i> 28<i>,</i> 167<i>,</i> 144<i>,</i> 55<i>,</i> 124<i>,</i> 55<i>,</i> 215<i>,</i> 237<i>,</i> 221<i>,</i> 77<i>,</i> 72<i>]</i></span><b>header.difficulty_threshold</b><span class="v">536,918,594</span><b>header.merkle_root</b></div>
<div class="mono doc" style="left:301px;top:713.0px"><span class="v"><i>[</i>0<i>,</i> 5<i>,</i> 117<i>,</i> 92<i>,</i> 181<i>,</i> 68<i>,</i> 99<i>,</i> 136<i>,</i> 122<i>,</i> 23<i>,</i> 131<i>,</i> 252<i>,</i> 40<i>,</i> 102<i>,</i> 73<i>,</i> 14<i>,</i> 51<i>,</i> 34<i>,</i> 210<i>,</i> 139<i>,</i> 138<i>,</i> 51<i>,</i> 119<i>,</i> 170<i>,</i> 8<i>,</i> 160<i>,</i> 83<i>,</i> 233<i>,</i> 123<i>,</i> 64<i>,</i> 191<i>,</i> 195<i>,</i> 144<i>,</i> 87<i>,</i> 188<i>,</i> 57<i>,</i> 161<i>,</i> 124<i>,</i> 49<i>,</i> 175<i>,</i> 26<i>,</i> 248<i>,</i> 33<i>,</i> 124<i>,</i> 62<i>,</i> 23<i>,</i> 81<i>,</i> 80<i>,</i> 6<i>,</i> 139<i>,</i> 12</span></div>
<div class="mono doc" style="left:305px;top:731.0px"><b>header.time</b><span class="v">Mar 11, 2023 @ 06:42:36.000</span><b>header.version</b><span class="v">4</span><b>transactions.V4.expiry_height</b><span class="v">2,260,806</span><b>transactions.V4.inputs.Coinbase.data</b><span class="v"><i>[</i>1<i>,</i> 1<i>]</i></span><b>transactions.V4.inputs.Coinbase.height</b><span class="v">2,260,806</span><b>transactions.V4.inputs.Coinbase.script</b></div>
<div class="abs" style="left:39px;top:817px;width:1849px;height:1px;background:#e3e8f0"></div>
<svg class="abs" style="left:45px;top:759px" width="12" height="12" viewBox="0 0 12 12"><path d="M1.3 10.7L10.7 1.3M7.5 1.2H10.8V4.5M1.2 7.5V10.8H4.5" fill="none" stroke="#535966" stroke-width="0.9"/></svg>
<div class="abs" style="left:67px;top:757px;width:16px;height:16px;border:1px solid #ccd1d9;border-radius:4px;background:#fff"></div>
<div class="mono" style="left:91px;top:758.5px">Mar 11, 2023 @ 06:40:45.000</div>
<div class="mono doc" style="left:301px;top:758.0px"><b>header.commitment_bytes</b><span class="v"><i>[</i>209<i>,</i> 98<i>,</i> 172<i>,</i> 9<i>,</i> 117<i>,</i> 253<i>,</i> 139<i>,</i> 21<i>,</i> 212<i>,</i> 5<i>,</i> 237<i>,</i> 31<i>,</i> 89<i>,</i> 174<i>,</i> 49<i>,</i> 88<i>,</i> 171<i>,</i> 35<i>,</i> 103<i>,</i> 100<i>,</i> 184<i>,</i> 120<i>,</i> 49<i>,</i> 198<i>,</i> 43<i>,</i> 103<i>,</i> 116<i>,</i> 83<i>,</i> 243<i>,</i> 127<i>,</i> 231<i>,</i> 102<i>]</i></span><b>header.difficulty_threshold</b><span class="v">536,918,504</span><b>header.merkle_root</b></div>
<div class="mono doc" style="left:301px;top:778.0px"><span class="v"><i>[</i>1<i>,</i> 26<i>,</i> 228<i>,</i> 208<i>,</i> 102<i>,</i> 154<i>,</i> 66<i>,</i> 142<i>,</i> 228<i>,</i> 20<i>,</i> 192<i>,</i> 66<i>,</i> 213<i>,</i> 218<i>,</i> 113<i>,</i> 144<i>,</i> 132<i>,</i> 201<i>,</i> 41<i>,</i> 89<i>,</i> 41<i>,</i> 23<i>,</i> 162<i>,</i> 116<i>,</i> 40<i>,</i> 53<i>,</i> 22<i>,</i> 189<i>,</i> 43<i>,</i> 160<i>,</i> 12<i>,</i> 117<i>,</i> 148<i>,</i> 163<i>,</i> 99<i>,</i> 64<i>,</i> 250<i>,</i> 59<i>,</i> 209<i>,</i> 114<i>,</i> 134<i>,</i> 149<i>,</i> 33<i>,</i> 158<i>,</i> 53<i>,</i> 122<i>,</i> 71<i>,</i> 140<i>,</i> 12<i>,</i> 1</span></div>
<div class="mono doc" style="left:305px;top:796.0px"><b>header.time</b><span class="v">Mar 11, 2023 @ 06:40:45.000</span><b>header.version</b><span class="v">4</span><b>transactions.V4.expiry_height</b><span class="v">2,260,805</span><b>transactions.V4.inputs.Coinbase.data</b><span class="v"><i>[</i>1<i>,</i> 1<i>]</i></span><b>transactions.V4.inputs.Coinbase.height</b><span class="v">2,260,805</span><b>transactions.V4.inputs.Coinbase.script</b></div>
<div class="abs" style="left:39px;top:882px;width:1849px;height:1px;background:#e3e8f0"></div>
<svg class="abs" style="left:45px;top:824px" width="12" height="12" viewBox="0 0 12 12"><path d="M1.3 10.7L10.7 1.3M7.5 1.2H10.8V4.5M1.2 7.5V10.8H4.5" fill="none" stroke="#535966" stroke-width="0.9"/></svg>
<div class="abs" style="left:67px;top:822px;width:16px;height:16px;border:1px solid #ccd1d9;border-radius:4px;background:#fff"></div>
<div class="mono" style="left:91px;top:823.5px">Mar 11, 2023 @ 06:39:52.000</div>
<div class="mono doc" style="left:301px;top:823.0px"><b>header.commitment_bytes</b><span class="v"><i>[</i>88<i>,</i> 204<i>,</i> 178<i>,</i> 123<i>,</i> 146<i>,</i> 12<i>,</i> 45<i>,</i> 169<i>,</i> 57<i>,</i> 126<i>,</i> 108<i>,</i> 186<i>,</i> 246<i>,</i> 213<i>,</i> 253<i>,</i> 59<i>,</i> 253<i>,</i> 117<i>,</i> 103<i>,</i> 175<i>,</i> 67<i>,</i> 83<i>,</i> 81<i>,</i> 26<i>,</i> 129<i>,</i> 143<i>,</i> 54<i>,</i> 33<i>,</i> 48<i>,</i> 40<i>,</i> 63<i>,</i> 32<i>]</i></span><b>header.difficulty_threshold</b><span class="v">536,919,240</span><b>header.merkle_root</b></div>
<div class="mono doc" style="left:301px;top:843.0px"><span class="v"><i>[</i>1<i>,</i> 222<i>,</i> 185<i>,</i> 226<i>,</i> 206<i>,</i> 88<i>,</i> 207<i>,</i> 90<i>,</i> 167<i>,</i> 27<i>,</i> 98<i>,</i> 44<i>,</i> 125<i>,</i> 189<i>,</i> 210<i>,</i> 44<i>,</i> 154<i>,</i> 242<i>,</i> 213<i>,</i> 88<i>,</i> 208<i>,</i> 10<i>,</i> 221<i>,</i> 7<i>,</i> 122<i>,</i> 65<i>,</i> 201<i>,</i> 240<i>,</i> 252<i>,</i> 145<i>,</i> 44<i>,</i> 87<i>,</i> 67<i>,</i> 109<i>,</i> 60<i>,</i> 59<i>,</i> 99<i>,</i> 147<i>,</i> 59<i>,</i> 184<i>,</i> 158<i>,</i> 197<i>,</i> 22<i>,</i> 108<i>,</i> 76<i>,</i> 7<i>,</i> 21<i>,</i> 86<i>,</i> 182<i>,</i> 2</span></div>
<div class="mono doc" style="left:305px;top:861.0px"><b>header.time</b><span class="v">Mar 11, 2023 @ 06:39:52.000</span><b>header.version</b><span class="v">4</span><b>transactions.V4.expiry_height</b><span class="v">2,260,804</span><b>transactions.V4.inputs.Coinbase.data</b><span class="v"><i>[</i>1<i>,</i> 1<i>]</i></span><b>transactions.V4.inputs.Coinbase.height</b><span class="v">2,260,804</span><b>transactions.V4.inputs.Coinbase.script</b></div>

</body></html>
